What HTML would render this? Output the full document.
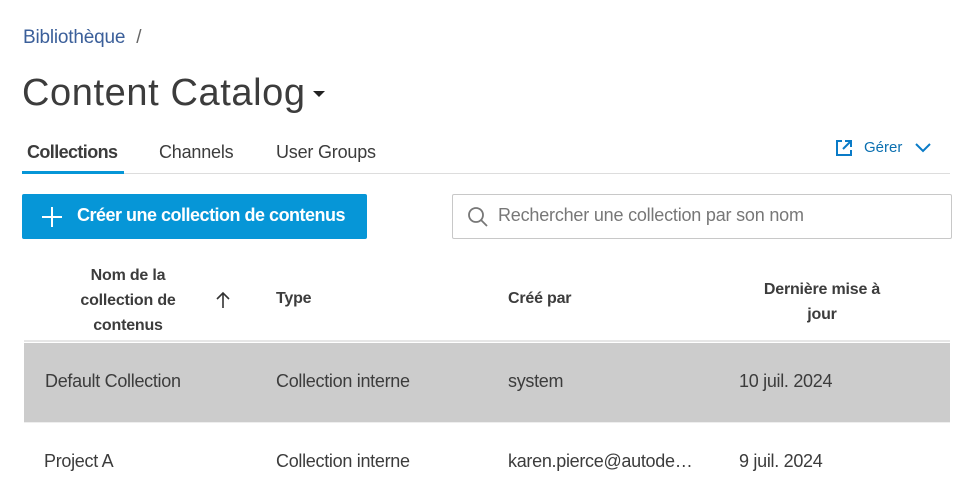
<!DOCTYPE html>
<html><head><meta charset="utf-8"><style>
*{margin:0;padding:0;box-sizing:border-box}
body{width:972px;height:499px;overflow:hidden;background:#fff;font-family:"Liberation Sans",sans-serif;color:#3c3c3c;position:relative}
.a{position:absolute;white-space:nowrap}
.h{font-weight:bold;font-size:16px;color:#3c3c3c;letter-spacing:-0.2px}
.c{font-size:18px;color:#3c3c3c;letter-spacing:-0.3px}
</style></head><body>
<div class="a" style="left:23px;top:27px;font-size:19px;color:#3b5f9a;letter-spacing:-0.2px">Bibliothèque <span style="color:#666;margin-left:6px">/</span></div>
<div class="a" style="left:22px;top:72px;font-size:38px;color:#3c3c3c;letter-spacing:0.6px">Content Catalog</div>
<div class="a" style="left:313px;top:91px;width:0;height:0;border-left:6px solid transparent;border-right:6px solid transparent;border-top:6px solid #222"></div>
<div class="a" style="left:27px;top:142px;font-size:18px;font-weight:bold;color:#3c3c3c;letter-spacing:-0.6px">Collections</div>
<div class="a" style="left:159px;top:142px;font-size:18px;color:#3c3c3c;letter-spacing:-0.2px">Channels</div>
<div class="a" style="left:276px;top:142px;font-size:18px;color:#3c3c3c;letter-spacing:-0.2px">User Groups</div>
<div class="a" style="left:22px;top:173px;width:928px;height:1px;background:#ddd"></div>
<div class="a" style="left:22px;top:171px;width:102px;height:3px;background:#0696d7"></div>
<svg class="a" style="left:834px;top:138px" width="20" height="20" viewBox="0 0 20 20" fill="none" stroke="#0a7bc7" stroke-width="2"><path d="M8 3H3v14h14v-5"/><path d="M11 3h6v6M17 3l-8 8"/></svg>
<div class="a" style="left:864px;top:139px;font-size:15px;color:#0a6fb0">Gérer</div>
<svg class="a" style="left:914px;top:142px" width="18" height="12" viewBox="0 0 18 12" fill="none" stroke="#0a7bc7" stroke-width="2"><path d="M2 2l7 7 7-7"/></svg>
<div class="a" style="left:22px;top:194px;width:345px;height:45px;background:#0696d7;border-radius:2px"></div>
<svg class="a" style="left:41px;top:206px" width="22" height="22" viewBox="0 0 22 22" stroke="#fff" stroke-width="2"><path d="M11 1v20M1 11h20"/></svg>
<div class="a" style="left:77px;top:205px;font-size:18px;font-weight:bold;color:#fff;letter-spacing:-0.5px">Créer une collection de contenus</div>
<div class="a" style="left:452px;top:194px;width:500px;height:45px;border:1px solid #c8c8c8;border-radius:2px"></div>
<svg class="a" style="left:467px;top:206px" width="22" height="22" viewBox="0 0 22 22" fill="none" stroke="#777" stroke-width="1.8"><circle cx="9" cy="9" r="7"/><path d="M14 14l6 6"/></svg>
<div class="a" style="left:498px;top:205px;font-size:18px;color:#777;letter-spacing:-0.2px">Rechercher une collection par son nom</div>
<div class="a h" style="left:66px;top:263px;width:124px;text-align:center;line-height:25px;white-space:normal">Nom de la collection de contenus</div>
<svg class="a" style="left:215px;top:291px" width="16" height="18" viewBox="0 0 16 18" fill="none" stroke="#333" stroke-width="1.6"><path d="M8 17V2M2 8l6-6 6 6"/></svg>
<div class="a h" style="left:276px;top:290px">Type</div>
<div class="a h" style="left:508px;top:290px">Créé par</div>
<div class="a h" style="left:752px;top:277px;width:140px;text-align:center;line-height:25px;white-space:normal">Dernière mise à jour</div>
<div class="a" style="left:24px;top:340px;width:926px;height:2px;background:#e6e6e6"></div>
<div class="a" style="left:24px;top:343px;width:926px;height:79px;background:#cccccc"></div>
<div class="a" style="left:24px;top:422px;width:926px;height:1px;background:#eee"></div>
<div class="a c" style="left:45px;top:371px">Default Collection</div>
<div class="a c" style="left:276px;top:371px">Collection interne</div>
<div class="a c" style="left:508px;top:371px">system</div>
<div class="a c" style="left:739px;top:371px">10 juil. 2024</div>
<div class="a c" style="left:44px;top:451px">Project A</div>
<div class="a c" style="left:276px;top:451px">Collection interne</div>
<div class="a c" style="left:508px;top:451px;width:192px;overflow:hidden;text-overflow:ellipsis">karen.pierce@autodesk.com</div>
<div class="a c" style="left:739px;top:451px">9 juil. 2024</div>
</body></html>
